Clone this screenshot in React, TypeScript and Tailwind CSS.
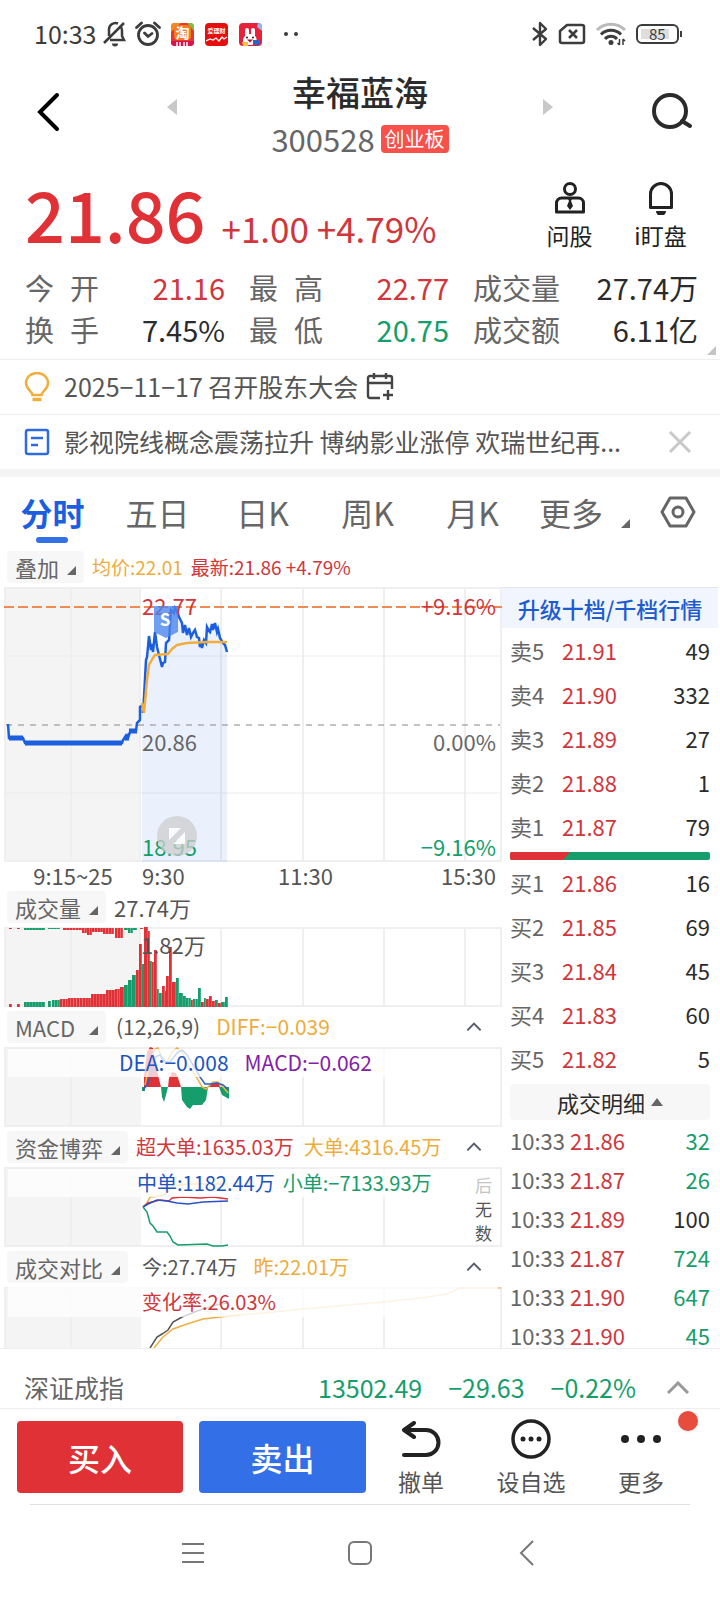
import React from 'react';

const RED = '#e03136';
const GREEN = '#159e6b';
const BLUE = '#1b5fe0';
const ORANGE = '#f2ae3d';

type Order = { label: string; price: string; amount: number };

const sells: Order[] = [
  { label: '卖5', price: '21.91', amount: 49 },
  { label: '卖4', price: '21.90', amount: 332 },
  { label: '卖3', price: '21.89', amount: 27 },
  { label: '卖2', price: '21.88', amount: 1 },
  { label: '卖1', price: '21.87', amount: 79 },
];

const buys: Order[] = [
  { label: '买1', price: '21.86', amount: 16 },
  { label: '买2', price: '21.85', amount: 69 },
  { label: '买3', price: '21.84', amount: 45 },
  { label: '买4', price: '21.83', amount: 60 },
  { label: '买5', price: '21.82', amount: 5 },
];

const trades = [
  { time: '10:33', price: '21.86', amount: 32, color: 'text-[#159e6b]' },
  { time: '10:33', price: '21.87', amount: 26, color: 'text-[#159e6b]' },
  { time: '10:33', price: '21.89', amount: 100, color: 'text-[#2b2b2b]' },
  { time: '10:33', price: '21.87', amount: 724, color: 'text-[#159e6b]' },
  { time: '10:33', price: '21.90', amount: 647, color: 'text-[#159e6b]' },
  { time: '10:33', price: '21.90', amount: 45, color: 'text-[#159e6b]' },
];

const stats = [
  { label: '今开', value: '21.16', color: 'text-[#d0363b]' },
  { label: '最高', value: '22.77', color: 'text-[#d0363b]' },
  { label: '成交量', value: '27.74万', color: 'text-[#2b2b2b]' },
  { label: '换手', value: '7.45%', color: 'text-[#2b2b2b]' },
  { label: '最低', value: '20.75', color: 'text-[#159e6b]' },
  { label: '成交额', value: '6.11亿', color: 'text-[#2b2b2b]' },
];

// x, width, height, color
type Bar = [number, number, number, string];

const volumeBars: Bar[] = [
  [5, 3, 3, RED], [13, 3, 3, RED], [20, 21, 5, GREEN], [44, 3, 6, GREEN], [48, 8, 7, GREEN],
  [56, 8, 8, RED], [64, 23, 9, RED], [87, 15, 13, RED], [102, 9, 17, RED], [111, 5, 18, RED],
  [116, 4, 20, RED], [120, 4, 22, GREEN], [124, 4, 27, GREEN], [128, 4, 32, GREEN],
  [132, 3, 37, RED], [135, 3, 63, RED], [138, 3, 43, GREEN], [140, 4, 80, RED],
  [144, 2, 76, RED], [145, 3, 46, GREEN], [148, 2, 45, RED], [150, 3, 57, RED],
  [153, 2, 18, GREEN], [155, 3, 14, GREEN], [158, 3, 21, RED], [161, 2, 16, RED],
  [162, 3, 31, RED], [165, 3, 60, RED], [168, 4, 25, RED], [172, 3, 29, GREEN],
  [175, 4, 14, GREEN], [179, 3, 11, GREEN], [182, 5, 9, GREEN], [187, 2, 7, RED],
  [189, 5, 8, GREEN], [194, 3, 19, GREEN], [197, 3, 5, RED], [200, 2, 9, GREEN],
  [202, 3, 8, RED], [205, 3, 11, RED], [208, 3, 6, RED], [211, 3, 7, GREEN],
  [214, 3, 4, RED], [217, 4, 5, GREEN], [221, 3, 10, GREEN],
];

const unmatchedBars: Bar[] = [
  [5, 3, 1, RED], [13, 3, 1, RED], [20, 21, 2, GREEN], [44, 12, 1, GREEN], [59, 19, 2, RED],
  [78, 5, 5, RED], [83, 5, 7, RED], [88, 11, 4, RED], [99, 11, 6, RED], [111, 8, 10, RED],
  [120, 4, 2, GREEN], [124, 5, 5, GREEN], [129, 4, 2, GREEN], [136, 3, 1, RED],
];

const priceLine =
  '139,126 140,110 142,73 143,70 145,49 147,63 148,57 149,65 151,45 153,60 155,68 158,80 159,76 161,75 162,56 165,53 167,23 170,26 171,21 173,24 175,30 178,36 179,46 181,38 183,48 185,41 187,50 189,46 191,43 193,50 195,51 196,60 197,56 198,61 200,53 202,56 203,40 205,44 206,45 208,37 209,43 211,36 213,45 214,42 216,51 219,56 221,58 223,65';

const auctionLine =
  '4,137 5,151 19,151 21,156 118,156 119,153 121,150 121,153 124,147 124,151 126,145 132,144 133,136 136,133 136,120 139,118 139,126';

function Grid({ height, lines, rows = [] }: { height: number; lines: number[]; rows?: number[] }) {
  return (
    <g>
      <rect x="0" y="0" width="137" height={height} fill="#f4f4f4" />
      {lines.map((x) => (
        <line key={x} x1={x} x2={x} y1="0" y2={height} stroke="#efefef" strokeWidth="2" />
      ))}
      {rows.map((y) => (
        <line key={y} x1="2" x2="496" y1={y} y2={y} stroke="#ececec" strokeWidth="1" />
      ))}
      <rect x="1" y="1" width="496" height={height - 2} fill="none" stroke="#efefef" strokeWidth="2" />
    </g>
  );
}

function Corner({ className = '' }: { className?: string }) {
  return (
    <svg viewBox="0 0 10 10" className={`size-[9px] ${className}`} fill="currentColor">
      <path d="M10 0v10H0z" />
    </svg>
  );
}

function Chevron({ className = '' }: { className?: string }) {
  return (
    <svg viewBox="0 0 24 14" className={className} fill="none" stroke="currentColor" strokeWidth="3">
      <path d="M2 12L12 2l10 10" />
    </svg>
  );
}

function StatusBar() {
  return (
    <div className="flex h-[68px] items-center pr-[38px] pl-[34px] text-[#3c3c3c]">
      <span className="text-[25px]">10:33</span>
      <svg viewBox="0 0 24 26" className="ml-[7px] h-[26px] w-6" fill="none" stroke="currentColor" strokeWidth="2.500">
        <path d="M7 19h14l-2-4V9.500a7 7 0 0 0-2-5M15 2.500A6.500 6.500 0 0 0 6 9v6M1 22L21 2" />
        <path d="M9 22.500a3 3 0 0 0 6 0z" fill="currentColor" stroke="none" />
      </svg>
      <svg viewBox="0 0 26 26" className="ml-2 size-[26px]" fill="none" stroke="currentColor" strokeWidth="2.800" strokeLinecap="round">
        <circle cx="13" cy="14" r="9.500" />
        <path d="M9.500 12l3.500 3.500 4-3M1.500 6.500l5-4.500M24.500 6.500l-5-4.500" />
      </svg>
      <svg viewBox="0 0 23 23" className="ml-2.5 size-[23px]">
        <rect width="23" height="23" rx="4" fill="#e8362c" />
        <path d="M0 4a4 4 0 0 1 4-4h6L0 9z" fill="#f08a24" />
        <path d="M16 0h3a4 4 0 0 1 4 4v4z" fill="#7ac143" />
        <rect x="3" y="2" width="17" height="15" rx="4" fill="#f47b20" />
        <text x="11.500" y="14.500" fontSize="14" fontWeight="700" textAnchor="middle" fill="#fff">淘</text>
        <path d="M0 18h23v1a4 4 0 0 1-4 4H4a4 4 0 0 1-4-4z" fill="#d8124c" />
        <path d="M6 19v4M9 19v4M13 19v4M16 19v4" stroke="#fff" strokeWidth="1.500" />
      </svg>
      <svg viewBox="0 0 23 23" className="ml-[11px] size-[23px]">
        <rect width="23" height="23" rx="4" fill="#e60f0f" />
        <text x="11.500" y="9.500" fontSize="6" fontWeight="700" textAnchor="middle" fill="#fff">爱理财</text>
        <path d="M1 18l4-2 3 1 3-2 3 3 3-4 2 2 3-2" fill="none" stroke="#fff" strokeWidth="1.300" />
      </svg>
      <svg viewBox="0 0 23 23" className="ml-[11px] size-[23px]">
        <rect width="23" height="23" rx="4" fill="#e8203a" />
        <path d="M19 0a4 4 0 0 1 4 4v4l-5-4z" fill="#8fb6ea" />
        <path d="M6 13V7a1.500 1.500 0 0 1 4 0v4h2V7a1.500 1.500 0 0 1 4 0v6c3 3 2 9-4 9H9c-6 0-6-6-3-9z" fill="#fff" />
        <circle cx="8" cy="14.500" r="1" fill="#222" />
        <circle cx="14" cy="14.500" r="1" fill="#222" />
        <path d="M8 16.500h6l-3 3z" fill="#b3122a" />
        <path d="M3 19h6v4H4z" fill="#f5c242" />
        <rect x="14" y="17" width="7" height="5" fill="#2b62c4" />
      </svg>
      <svg viewBox="0 0 18 6" className="ml-5 h-[6px] w-[18px]" fill="currentColor">
        <circle cx="4" cy="3" r="2" />
        <circle cx="14" cy="3" r="2" />
      </svg>

      <svg viewBox="0 0 16 26" className="ml-auto h-[26px] w-4" fill="none" stroke="currentColor" strokeWidth="2.400" strokeLinejoin="round">
        <path d="M1 7l13 11-6 6V2l6 6L1 19" />
      </svg>
      <svg viewBox="0 0 28 22" className="ml-2.5 h-[22px] w-7" fill="none" stroke="currentColor" strokeWidth="2.500">
        <path d="M9 2h15a2 2 0 0 1 2 2v14a2 2 0 0 1-2 2H4a2 2 0 0 1-2-2V8z" strokeLinejoin="round" />
        <path d="M11 7l8 8M19 7l-8 8" />
      </svg>
      <svg viewBox="0 0 30 24" className="ml-2.5 h-6 w-[30px]" fill="none" strokeWidth="3">
        <path d="M1 8a20 20 0 0 1 28 0" stroke="#b9b9b9" />
        <path d="M5 12.500a14 14 0 0 1 20 0M9 17a8 8 0 0 1 12 0" stroke="currentColor" />
        <circle cx="15" cy="20.500" r="2.500" fill="currentColor" />
        <path d="M23.500 17v6M21.500 21l2 2M27 23v-6M29 19l-2-2" stroke="currentColor" strokeWidth="1.500" />
      </svg>
      <div className="ml-2.5 flex h-5 w-[43px] rounded-md border-2 border-[#3c3c3c] p-[3px]">
        <div className="h-full w-7 bg-[#dedede]">
          <span className="ml-2 block text-[15px] leading-[10px]">85</span>
        </div>
      </div>
      <div className="ml-px h-1.5 w-0.5 bg-[#3c3c3c]" />
    </div>
  );
}

function Header() {
  return (
    <header className="flex h-24 items-start pr-[27px] pl-9">
      <button aria-label="返回" className="pt-6">
        <svg viewBox="0 0 26 40" className="h-10 w-[26px]" fill="none" stroke="#000" strokeWidth="4" strokeLinecap="round">
          <path d="M21 3L4 20l17 17" />
        </svg>
      </button>
      <button aria-label="上一只" className="ml-[105px] pt-[31px]">
        <svg viewBox="0 0 10 16" className="h-4 w-2.5" fill="#c8c8c8">
          <path d="M10 0v16L0 8z" />
        </svg>
      </button>
      <div className="flex-1 text-center">
        <h1 className="text-[34px] leading-[48px] font-medium text-[#2b2b2b]">幸福蓝海</h1>
        <div className="flex items-center justify-center gap-1.5">
          <span className="text-[31px] leading-[46px] text-[#666]">300528</span>
          <span className="rounded bg-[#f8504a] px-1 text-[20px] leading-7 text-white">创业板</span>
        </div>
      </div>
      <button aria-label="下一只" className="mr-[98px] pt-[31px]">
        <svg viewBox="0 0 10 16" className="h-4 w-2.5" fill="#c8c8c8">
          <path d="M0 0v16l10-8z" />
        </svg>
      </button>
      <button aria-label="搜索" className="pt-6">
        <svg viewBox="0 0 42 40" className="h-10 w-[42px]" fill="none" stroke="#2b2b2b" strokeWidth="4">
          <circle cx="19" cy="19" r="16" />
          <path d="M31 29l8 5" strokeLinecap="round" />
        </svg>
      </button>
    </header>
  );
}

function Quote() {
  return (
    <section className="relative pt-[11px] pr-[22px] pb-[9px] pl-[25px]">
      <div className="flex h-[76px]">
        <div className="flex flex-1 items-baseline gap-4 text-[#e03136]">
          <span className="text-[70px] leading-[76px] font-medium">21.86</span>
          <span className="text-[35px] leading-none text-[#d0363b]">+1.00 +4.79%</span>
        </div>
        <button className="flex w-[91px] flex-col items-center gap-1 pt-1.5 text-[23px] leading-8 text-[#222]">
          <svg viewBox="0 0 32 34" className="h-[34px] w-8 shrink-0" fill="none" stroke="currentColor" strokeWidth="3">
            <circle cx="16" cy="8" r="5.500" />
            <path d="M2.500 31V22a5 5 0 0 1 5-5h17a5 5 0 0 1 5 5v9z" strokeLinejoin="round" />
            <path d="M14 18h4l-1 2 2 5-3 4-3-4 2-5z" fill="currentColor" stroke="none" />
          </svg>
          问股
        </button>
        <button className="-mr-2 flex w-[91px] flex-col items-center gap-1 pt-1.5 text-[23px] leading-8 text-[#222]">
          <svg viewBox="0 0 32 34" className="h-[34px] w-8 shrink-0" fill="none" stroke="currentColor" strokeWidth="3">
            <path d="M5.500 26.500V13a10.500 10.500 0 0 1 21 0v13.500z" strokeLinejoin="round" />
            <path d="M11 30h10a5 5 0 0 1-10 0z" fill="currentColor" stroke="none" />
          </svg>
          i盯盘
        </button>
      </div>
      <dl className="mt-[15px] grid grid-cols-[8fr_8fr_9fr] gap-x-6 text-[29px] leading-[42px]">
        {stats.map((s) => (
          <div key={s.label} className="flex justify-between">
            <dt className={s.label.length === 2 ? 'w-[74px] text-[#666] [text-align-last:justify]' : 'text-[#666]'}>
              {s.label}
            </dt>
            <dd className={s.color}>{s.value}</dd>
          </div>
        ))}
      </dl>
      <Corner className="absolute right-1 bottom-1 text-[#c4c4c4]" />
    </section>
  );
}

function Notices() {
  return (
    <section className="border-b-8 border-[#f4f4f4] text-[25px] text-[#555]">
      <a href="#meeting" className="flex h-[55px] items-center border-t border-[#eee] pl-6">
        <svg viewBox="0 0 26 30" className="h-[30px] w-[26px]" fill="none" stroke={ORANGE} strokeWidth="2.500">
          <path d="M8.500 23c0-4-6.500-5-6.500-12a11 10 0 0 1 22 0c0 7-6.500 8-6.500 12z" />
          <path d="M8.500 27.500h9" strokeWidth="3.500" />
        </svg>
        <span className="ml-3.5">2025−11−17 召开股东大会</span>
        <svg viewBox="0 0 28 28" className="ml-2 size-7" fill="none" stroke="#444" strokeWidth="2.400">
          <path d="M14 25H4a2 2 0 0 1-2-2V5a2 2 0 0 1 2-2h20a2 2 0 0 1 2 2v11M2 10h24M8 0v6M20 0v6M22 17v10M17 22h10" />
        </svg>
      </a>
      <div className="flex h-[55px] items-center border-t border-[#eee] pr-7 pl-6">
        <svg viewBox="0 0 26 28" className="h-7 w-[26px] shrink-0" fill="none" stroke="#2f6be0" strokeWidth="2.500">
          <rect x="2" y="2" width="22" height="24" rx="2" />
          <path d="M7 10h12M7 17h7" />
        </svg>
        <a href="#news" className="ml-3.5 flex-1 truncate">
          影视院线概念震荡拉升 博纳影业涨停 欢瑞世纪再...
        </a>
        <button aria-label="关闭">
          <svg viewBox="0 0 24 24" className="size-6" fill="none" stroke="#c8c8c8" strokeWidth="3">
            <path d="M2 2l20 20M22 2L2 22" />
          </svg>
        </button>
      </div>
    </section>
  );
}

function Tabs() {
  return (
    <nav className="flex h-[70px] items-center pr-6 text-[32px] text-[#666]">
      <button className="relative h-full w-[105px] font-bold text-[#1b5fe0]">
        分时
        <span className="absolute bottom-1 left-9 h-1.5 w-8 rounded-sm bg-[#3370e6]" />
      </button>
      <button className="w-[105px]">五日</button>
      <button className="w-[105px]">日K</button>
      <button className="w-[105px]">周K</button>
      <button className="w-[105px]">月K</button>
      <button className="ml-3.5 flex items-end gap-[18px]">
        更多
        <Corner className="mb-2" />
      </button>
      <button aria-label="设置" className="ml-auto">
        <svg viewBox="0 0 36 32" className="h-8 w-9" fill="none" stroke="#666" strokeWidth="3" strokeLinejoin="round">
          <path d="M10 2h16l8 14-8 14H10L2 16z" />
          <circle cx="18" cy="16" r="5" />
        </svg>
      </button>
    </nav>
  );
}

function PanelHead({ title, toggle = true, children }: { title: string; toggle?: boolean; children: React.ReactNode }) {
  return (
    <div className="flex h-10 items-center pl-[3px] text-[20px] text-[#555]">
      <button
        className={`flex h-8 items-center justify-between gap-2 rounded bg-[#f7f7f7] px-2 text-[22px] text-[#666] ${
          title.length > 2 ? 'min-w-[99px]' : ''
        }`}
      >
        {title}
        <Corner className="mt-1.5" />
      </button>
      {children}
      {toggle && (
        <button aria-label="收起" className="mr-5 ml-auto">
          <Chevron className="h-2.5 w-4 text-[#555c70]" />
        </button>
      )}
    </div>
  );
}

function PriceChart() {
  return (
    <div className="relative">
      <svg viewBox="0 0 498 275" preserveAspectRatio="none" className="block h-[275px] w-full" fill="none">
        <Grid height={275} lines={[67, 136, 217, 299, 380, 461]} rows={[69, 206]} />
        <polygon points={`138,275 138,126 ${priceLine} 223,275`} fill="#3370e6" fillOpacity="0.1" />
        <line x1="2" x2="496" y1="138" y2="138" stroke="#888" strokeDasharray="6 6" />
        <line x1="0" x2="498" y1="20" y2="20" stroke="#f08a50" strokeWidth="2" strokeDasharray="10 4" />
        <polyline points={auctionLine} stroke={BLUE} strokeWidth="2.500" />
        <path d="M5 151h14M21 156h97M121 151h4M125 144h8" stroke={BLUE} strokeWidth="5" />
        <polyline points={priceLine} stroke={BLUE} strokeWidth="2.500" />
        <polyline
          points="138,116 140,126 143,93 145,78 149,71 151,68 164,67 168,62 173,58 183,56 203,55 223,55"
          stroke={ORANGE}
          strokeWidth="2.500"
        />
      </svg>
      <span className="absolute top-1 left-[138px] text-[22px] leading-7 text-[#d0363b]">22.77</span>
      <span className="absolute top-1 right-1.5 text-[22px] leading-7 text-[#d0363b]">+9.16%</span>
      <span className="absolute top-[140px] left-[138px] text-[22px] leading-7 text-[#666]">20.86</span>
      <span className="absolute top-[140px] right-1.5 text-[22px] leading-7 text-[#666]">0.00%</span>
      <span className="absolute bottom-1 left-[138px] text-[22px] leading-6 text-[#159e6b]">18.95</span>
      <span className="absolute right-1.5 bottom-1 text-[22px] leading-6 text-[#159e6b]">−9.16%</span>
      <svg viewBox="0 0 24 32" className="absolute top-[19px] left-[150px] h-8 w-6">
        <path d="M0 0h24v26l-12 6-12-6z" fill="#4c86ec" fillOpacity="0.8" />
        <text x="11" y="20" fontSize="17" fontWeight="700" textAnchor="middle" fill="#fff">S</text>
      </svg>
      <button aria-label="全屏" className="absolute bottom-[6px] left-[153px]">
        <svg viewBox="0 0 40 40" className="size-10">
          <circle cx="20" cy="20" r="20" fill="#cdcdcd" fillOpacity="0.75" />
          <path d="M12 12h12L12 24zM28 28H16l12-12z" fill="#fff" fillOpacity="0.9" />
        </svg>
      </button>
    </div>
  );
}

function renderBars(bars: Bar[], height: number, fromTop = false) {
  return bars.flatMap(([x, w, h, color]) => {
    const count = Math.max(1, Math.round(w / 3));
    const step = w / count;
    return Array.from({ length: count }, (_, i) => (
      <rect
        key={`${x}-${i}`}
        x={x + i * step}
        y={fromTop ? 1 : height - h}
        width={step - 0.2}
        height={h}
        fill={color}
      />
    ));
  });
}

function VolumeChart() {
  return (
    <div className="relative">
      <svg viewBox="0 0 498 80" preserveAspectRatio="none" className="block h-20 w-full">
        <Grid height={80} lines={[67, 136, 217, 299, 380, 461]} />
        {renderBars(volumeBars, 80)}
        {renderBars(unmatchedBars, 80, true)}
      </svg>
      <span className="absolute top-px left-[137px] text-[22px] leading-8 text-[#555]">1.82万</span>
    </div>
  );
}

function MacdChart() {
  return (
    <div className="relative">
      <svg viewBox="0 0 498 80" preserveAspectRatio="none" className="block h-20 w-full" fill="none">
        <Grid height={80} lines={[67, 217, 299, 380]} />
        <path
          d="M140 40V29l3-24 3-5 3 1 3 17 2 10 3 12zM164 40l1-9 3-6 4 1 2 5 3 9zM204 40l4-4 6-1 2 5z"
          fill={RED}
        />
        <path
          d="M138 40v4h3v-4zM157 40l1 10 2 5 2-7 2-8zM177 40l1 13 5 7 3 2 3-4h9l4-5 2-13zM215 40l3 8 7 4V40z"
          fill={GREEN}
        />
        <polyline
          points="141,38 146,15 151,2 154,1 158,11 163,15 168,5 173,1 178,5 184,18 193,31 198,40 202,42 209,35 214,35 219,40 224,46"
          stroke={ORANGE}
          strokeWidth="1.500"
        />
        <polyline
          points="139,43 143,38 148,25 151,10 156,8 161,15 166,15 173,6 178,3 183,8 189,18 196,30 201,37 206,37 213,36 219,38 224,42"
          stroke="#2a62d0"
          strokeWidth="1.500"
        />
      </svg>
      <div className="absolute top-0.5 right-1 left-1 flex h-7 items-center gap-4 bg-white/75 pl-[111px] text-[21px]">
        <span className="text-[#1d55c0]">DEA:−0.008</span>
        <span className="text-[#8420a8]">MACD:−0.062</span>
      </div>
    </div>
  );
}

function FundChart() {
  return (
    <div className="relative">
      <svg viewBox="0 0 498 80" preserveAspectRatio="none" className="block h-20 w-full" fill="none" strokeWidth="1.500">
        <Grid height={80} lines={[67, 217, 299, 380]} />
        <polyline points="139,40 143,36 146,30 156,29 163,26 169,19 183,17 224,17" stroke={ORANGE} />
        <polyline points="139,40 144,36 156,33 165,34 168,31 179,30 196,31 209,30 224,32" stroke={RED} />
        <polyline points="139,40 144,37 153,33 163,34 173,36 184,37 199,35 224,34" stroke="#2a50c8" />
        <polyline
          points="139,40 143,45 146,56 149,59 153,65 163,65 166,69 169,75 174,78 203,77 209,79 218,79 224,78"
          stroke={GREEN}
        />
      </svg>
      <div className="absolute top-0.5 right-1 left-1 flex h-7 items-center gap-2 bg-white/75 pl-[129px] text-[20px]">
        <span className="text-[#1d55c0]">中单:1182.44万</span>
        <span className="text-[#159e6b]">小单:−7133.93万</span>
      </div>
      <div className="absolute top-1.5 right-2.5 flex w-[17px] flex-col text-[17px] leading-6 text-[#555]">
        <span className="text-[#c4c4c4]">后</span>
        <span>无</span>
        <span>数</span>
      </div>
    </div>
  );
}

function CompareChart() {
  return (
    <div className="relative h-[61px] overflow-hidden">
      <svg viewBox="0 0 498 80" preserveAspectRatio="none" className="block h-20 w-full" fill="none" strokeWidth="1.500">
        <Grid height={80} lines={[67, 217, 299, 380]} />
        <polyline points="146,61 153,50 158,47 164,43 169,35 178,30 196,23 216,17 224,16" stroke="#555" />
        <polyline points="150,61 159,50 169,42 183,37 199,32 216,30 236,28" stroke={ORANGE} />
        <polyline
          points="236,28 269,25 299,22 333,19 379,15 416,11 443,7 456,1 461,1 497,1"
          stroke={ORANGE}
          strokeOpacity="0.6"
        />
      </svg>
      <div className="absolute top-0 right-1 left-1 flex h-[30px] items-center bg-white/75 pl-[134px] text-[20px] text-[#d0363b]">
        变化率:26.03%
      </div>
    </div>
  );
}

function OrderTable({ orders }: { orders: Order[] }) {
  return (
    <table className="w-full text-[22px]">
      <tbody>
        {orders.map((o) => (
          <tr key={o.label} className="h-11">
            <th className="w-[52px] text-left font-normal text-[#666]">{o.label}</th>
            <td className="text-[#d0363b]">{o.price}</td>
            <td className="text-right text-[#2b2b2b]">{o.amount}</td>
          </tr>
        ))}
      </tbody>
    </table>
  );
}

function OrderBook() {
  return (
    <aside className="h-[761px] w-[218px] shrink-0 overflow-hidden">
      <a
        href="#upgrade"
        className="mr-0.5 flex h-[41px] items-center justify-center border-t border-[#dfe5f0] bg-[#f1f5fd] text-[22px] font-medium text-[#1d5bd0]"
      >
        升级十档/千档行情
      </a>
      <div className="pr-2.5 pl-2">
        <OrderTable orders={sells} />
        <div className="mt-1 overflow-hidden rounded-xs">
          <svg viewBox="0 0 200 8" preserveAspectRatio="none" className="block h-2 w-full">
            <rect width="200" height="8" fill={GREEN} />
            <path d="M0 0h60l-7 8H0z" fill={RED} />
          </svg>
        </div>
        <OrderTable orders={buys} />
        <button className="mt-1 flex h-9 w-full items-center justify-center gap-1.5 rounded bg-[#f7f7f7] text-[22px] text-[#2b2b2b]">
          成交明细
          <svg viewBox="0 0 12 8" className="h-2 w-3" fill="#666">
            <path d="M6 0l6 8H0z" />
          </svg>
        </button>
        <table className="w-full text-[22px] leading-6">
          <tbody>
            {trades.map((t, i) => (
              <tr key={i} className="h-[39px]">
                <td className="w-[60px] text-[#666]">{t.time}</td>
                <td className="text-[#d0363b]">{t.price}</td>
                <td className={`text-right ${t.color}`}>{t.amount}</td>
              </tr>
            ))}
          </tbody>
        </table>
      </div>
    </aside>
  );
}

function IndexBar() {
  return (
    <section className="flex h-[60px] items-center border-t border-[#eee] pt-[18px] pr-[30px] pl-6 text-[25px] text-[#159e6b]">
      <span className="mr-auto text-[#666]">深证成指</span>
      <span>13502.49</span>
      <span className="ml-[26px]">−29.63</span>
      <span className="ml-[26px]">−0.22%</span>
      <button aria-label="展开指数" className="ml-[30px]">
        <Chevron className="h-3.5 w-6 text-[#999]" />
      </button>
    </section>
  );
}

function Actions() {
  return (
    <section className="relative flex h-24 items-start border-t border-[#eee] pt-3 pr-6 pl-[17px] text-[23px] text-[#555]">
      <button className="h-[72px] w-[166px] rounded bg-[#e03136] text-[32px] font-medium text-white">买入</button>
      <button className="ml-4 h-[72px] w-[167px] rounded bg-[#336fe6] text-[32px] font-medium text-white">卖出</button>
      <button className="flex flex-1 flex-col items-center gap-1">
        <svg viewBox="0 0 40 38" className="h-[38px] w-10" fill="none" stroke="#222" strokeWidth="4" strokeLinecap="round" strokeLinejoin="round">
          <path d="M13 2L3 9l10 7M3 9h22a12.500 12.500 0 0 1 0 25H3" />
        </svg>
        <span className="leading-9">撤单</span>
      </button>
      <button className="flex flex-1 flex-col items-center gap-1">
        <svg viewBox="0 0 40 38" className="h-[38px] w-10 overflow-visible" fill="none" stroke="#222">
          <circle cx="20" cy="18" r="18" strokeWidth="3.500" />
          <g fill="#222" stroke="none">
            <circle cx="12" cy="18" r="2.500" />
            <circle cx="20" cy="18" r="2.500" />
            <circle cx="28" cy="18" r="2.500" />
          </g>
        </svg>
        <span className="leading-9">设自选</span>
      </button>
      <button className="flex flex-1 flex-col items-center gap-1">
        <svg viewBox="0 0 40 38" className="h-[38px] w-10" fill="#222">
          <circle cx="4" cy="18" r="4" />
          <circle cx="20" cy="18" r="4" />
          <circle cx="36" cy="18" r="4" />
        </svg>
        <span className="leading-9">更多</span>
      </button>
      <span className="absolute top-0.5 right-[22px] size-5 rounded-full bg-[#e74c3c] shadow" />
    </section>
  );
}

function SystemNav() {
  return (
    <nav className="mx-[30px] flex h-24 items-center justify-center gap-[142px] border-t border-[#e0e0e0] text-[#777]">
      <button aria-label="最近任务">
        <svg viewBox="0 0 24 24" className="size-6" stroke="currentColor" strokeWidth="2">
          <path d="M1 3h22M1 12h22M1 21h22" />
        </svg>
      </button>
      <button aria-label="主屏幕">
        <svg viewBox="0 0 26 26" className="size-[26px]" fill="none" stroke="currentColor" strokeWidth="2">
          <rect x="2" y="2" width="22" height="22" rx="5" />
        </svg>
      </button>
      <button aria-label="返回上一页">
        <svg viewBox="0 0 24 26" className="h-[26px] w-6" fill="none" stroke="currentColor" strokeWidth="2">
          <path d="M18 1L6 13l12 12" />
        </svg>
      </button>
    </nav>
  );
}

export function App() {
  return (
    <div className="bg-white font-['Noto_Sans_CJK_SC',sans-serif]">
      <StatusBar />
      <Header />
      <Quote />
      <Notices />
      <Tabs />
      <div className="pl-1">
        <PanelHead title="叠加" toggle={false}>
          <span className="ml-2 text-[19px] text-[#eeac3c]">均价:22.01</span>
          <span className="ml-2 text-[19px] text-[#d0363b]">最新:21.86 +4.79%</span>
        </PanelHead>
      </div>
      <main className="flex pl-1">
        <div className="min-w-0 flex-1">
          <PriceChart />
          <div className="flex h-[25px] items-center pr-1.5 text-[22px] leading-6 text-[#555]">
            <span className="w-[138px] text-center">9:15~25</span>
            <span className="w-[136px]">9:30</span>
            <span>11:30</span>
            <span className="ml-auto">15:30</span>
          </div>
          <PanelHead title="成交量" toggle={false}>
            <span className="ml-2 text-[22px]">27.74万</span>
          </PanelHead>
          <VolumeChart />
          <PanelHead title="MACD">
            <span className="ml-2.5 text-[21px]">(12,26,9)</span>
            <span className="ml-4 text-[21px] text-[#eeac3c]">DIFF:−0.039</span>
          </PanelHead>
          <MacdChart />
          <PanelHead title="资金博弈">
            <span className="ml-2 text-[#d0363b]">超大单:1635.03万</span>
            <span className="ml-2.5 text-[#eeac3c]">大单:4316.45万</span>
          </PanelHead>
          <FundChart />
          <PanelHead title="成交对比">
            <span className="ml-3.5">今:27.74万</span>
            <span className="ml-4 text-[#eeac3c]">昨:22.01万</span>
          </PanelHead>
          <CompareChart />
        </div>
        <OrderBook />
      </main>
      <IndexBar />
      <Actions />
      <SystemNav />
    </div>
  );
}

export default App;
